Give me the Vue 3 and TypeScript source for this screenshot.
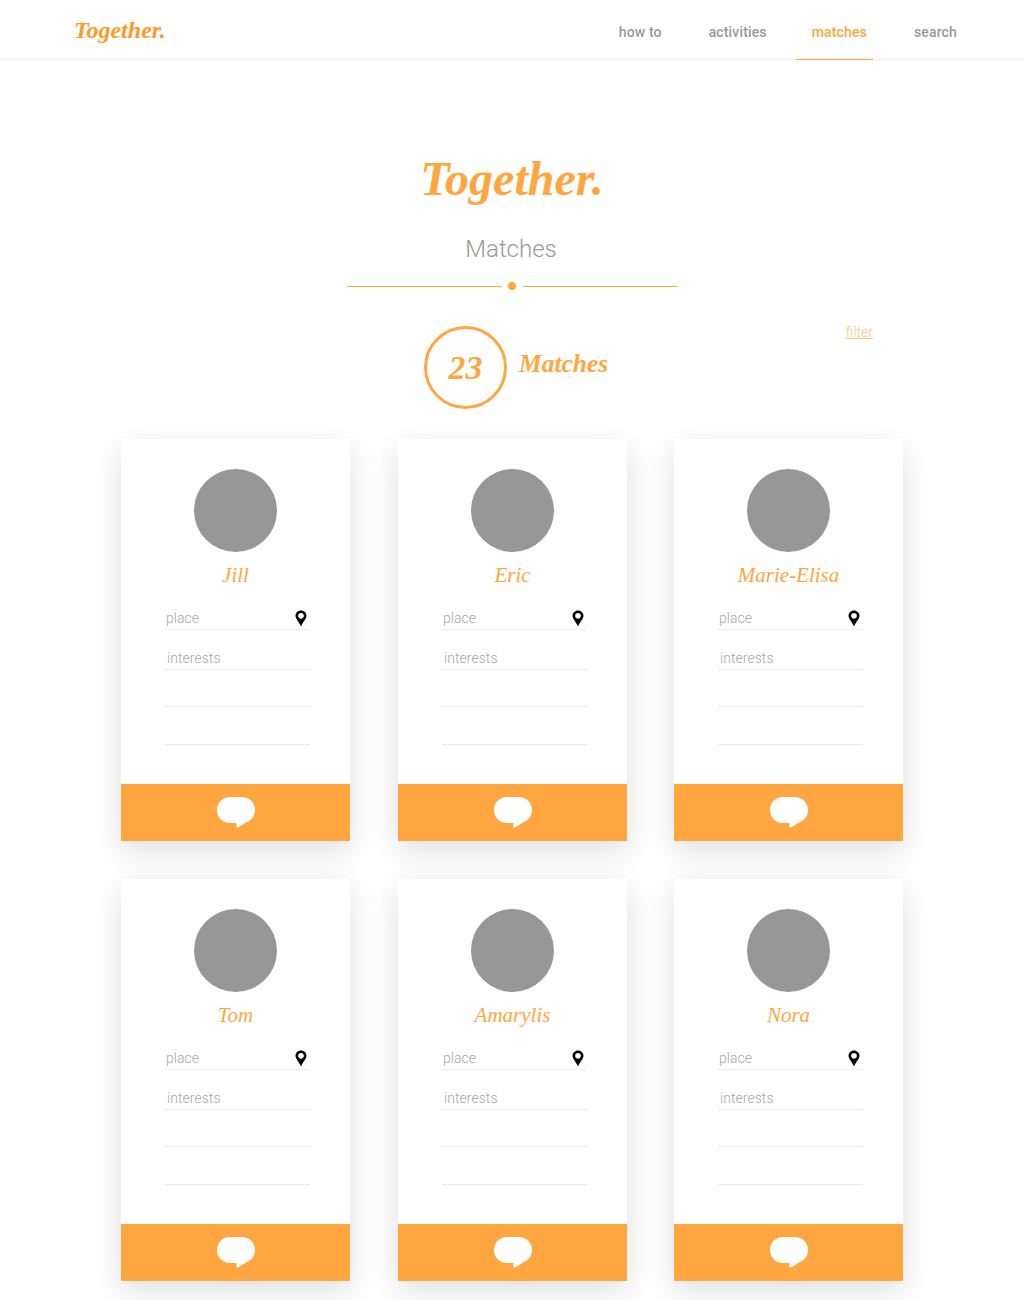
<template>
  <div id="page">
    <header id="topbar">
      <div id="logo" class="script">Together.</div>
      <nav id="links">
        <a v-for="link in links" :key="link" class="link" :class="{ active: link === 'matches' }">{{ link }}</a>
      </nav>
    </header>

    <section id="hero">
      <h1 class="script">Together.</h1>
      <h2>Matches</h2>
      <div id="divider">
        <span class="rule"></span>
        <span class="dot"></span>
        <span class="rule"></span>
      </div>
    </section>

    <section id="summary">
      <div id="count" class="script">23</div>
      <div id="count-label" class="script">Matches</div>
      <a id="filter">filter</a>
    </section>

    <main id="cards">
      <article v-for="name in names" :key="name" class="card">
        <div class="card-body">
          <div class="avatar"></div>
          <div class="name script">{{ name }}</div>
          <div class="row place">
            <span>place</span>
            <svg class="pin" width="12" height="17" viewBox="0 0 12 17">
              <path
                fill-rule="evenodd"
                d="M6 0.5C2.9 0.5 0.5 2.9 0.5 5.800C0.500 8.800 3.600 11.200 6 16.500C8.400 11.200 11.500 8.800 11.500 5.800C11.500 2.900 9.100 0.500 6 0.500ZM6 3C7.600 3 8.900 4.300 8.900 5.800C8.900 7.400 7.600 8.700 6 8.700C4.400 8.700 3.100 7.400 3.100 5.800C3.100 4.300 4.400 3 6 3Z"
              />
            </svg>
          </div>
          <div class="row interests"><span>interests</span></div>
          <div class="row blank"></div>
          <div class="row blank last"></div>
        </div>
        <div class="card-foot">
          <svg width="38" height="31" viewBox="0 0 38 31">
            <path
              fill="#fff"
              d="M13 0H25C32.500 0 38 5.600 38 13C38 19.500 33.500 24 29 25.500C26 27.500 22.500 29.800 19.500 31V26H13C5.500 26 0 20.400 0 13C0 5.600 5.500 0 13 0Z"
            />
          </svg>
        </div>
      </article>
    </main>
  </div>
</template>

<script setup lang="ts">
const links: string[] = ['how to', 'activities', 'matches', 'search'];
const names: string[] = ['Jill', 'Eric', 'Marie-Elisa', 'Tom', 'Amarylis', 'Nora'];
</script>

<style>
body {
  background: #fff;
}
</style>

<style scoped>
#page {
  width: 1024px;
  height: 1300px;
  overflow: hidden;
  font-family: Roboto, "Liberation Sans", sans-serif;
}

.script {
  font-family: "Liberation Serif", cursive;
  font-style: italic;
  font-weight: 700;
  color: #ffa640;
}

#topbar {
  height: 58px;
  border-bottom: 3px solid #f5f5f5;
  display: flex;
  justify-content: space-between;
  align-items: center;
  padding: 0 51px 0 74px;
}

#logo {
  margin-top: 3px;
  font-size: 24px;
  color: #ff9a26;
}

#links {
  display: flex;
  align-self: stretch;
}

.link {
  position: relative;
  display: flex;
  align-items: center;
  padding: 6px 16px 0;
  margin-left: 15px;
  font-size: 14px;
  font-weight: 500;
  letter-spacing: 0.15px;
  color: #999;
}

.link.active {
  margin-left: 13px;
  color: #ffa640;
}

.link.active::after {
  content: "";
  position: absolute;
  left: 0;
  right: 10px;
  bottom: -2px;
  height: 1px;
  background: #ffa640;
}

#hero {
  display: flex;
  flex-direction: column;
  align-items: center;
  padding-top: 82px;
}

#hero h1 {
  margin: 0;
  height: 72px;
  line-height: 72px;
  font-size: 48px;
}

#hero h2 {
  margin: 20px 0 0;
  padding-right: 2px;
  height: 28px;
  line-height: 28px;
  font-size: 24px;
  font-weight: 300;
  color: #999;
}

#divider {
  display: flex;
  align-items: center;
  margin-top: 19px;
  height: 8px;
}

.rule {
  width: 155px;
  height: 1px;
  background: #ffa640;
}

.dot {
  width: 8px;
  height: 8px;
  margin: 0 7px 0 6px;
  border-radius: 50%;
  background: #ffa640;
}

#summary {
  position: relative;
  display: flex;
  height: 83px;
  margin-top: 36px;
  padding-left: 424px;
}

#count {
  box-sizing: border-box;
  width: 83px;
  height: 83px;
  border: 3px solid #ffa640;
  border-radius: 50%;
  display: flex;
  align-items: center;
  justify-content: center;
  font-size: 34px;
}

#count-label {
  margin: 18px 0 0 12px;
  font-size: 25.500px;
  line-height: 40px;
}

#filter {
  position: absolute;
  top: -2px;
  right: 151px;
  font-size: 14px;
  font-weight: 300;
  color: #ffa640;
  opacity: 0.65;
  text-decoration: underline;
}

#cards {
  display: grid;
  grid-template-columns: 277px 276px 229px;
  row-gap: 38px;
  width: 782px;
  margin: 30px 0 0 121px;
}

.card {
  width: 229px;
  height: 402px;
  display: flex;
  flex-direction: column;
  background: #fff;
  box-shadow: 0 10px 30px rgba(0, 0, 0, 0.13);
}

.card-body {
  flex: 1;
  display: flex;
  flex-direction: column;
  padding-top: 30px;
}

.avatar {
  width: 83px;
  height: 83px;
  margin: 0 auto;
  border-radius: 50%;
  background: #979797;
}

.name {
  height: 32px;
  margin-top: 7px;
  text-align: center;
  line-height: 32px;
  font-size: 21px;
  font-weight: 400;
}

.row {
  box-sizing: border-box;
  display: flex;
  justify-content: space-between;
  align-items: center;
  width: 145px;
  margin-left: 44px;
  border-bottom: 1px solid #ececec;
  font-size: 14px;
  font-weight: 300;
  letter-spacing: 0.05px;
  color: #a6a6a6;
}

.place {
  height: 28px;
  margin-top: 11px;
  margin-left: 43px;
  padding: 4px 2px 0 2px;
}

.interests {
  height: 28px;
  margin-top: 12px;
  padding: 4px 0 0 2px;
}

.blank {
  height: 37px;
}

.blank.last {
  height: 38px;
}

.pin {
  margin-top: 2px;
}

.card-foot {
  height: 57px;
  display: flex;
  justify-content: center;
  align-items: flex-start;
  padding-top: 13px;
  box-sizing: border-box;
  background: #ffa640;
}
</style>
